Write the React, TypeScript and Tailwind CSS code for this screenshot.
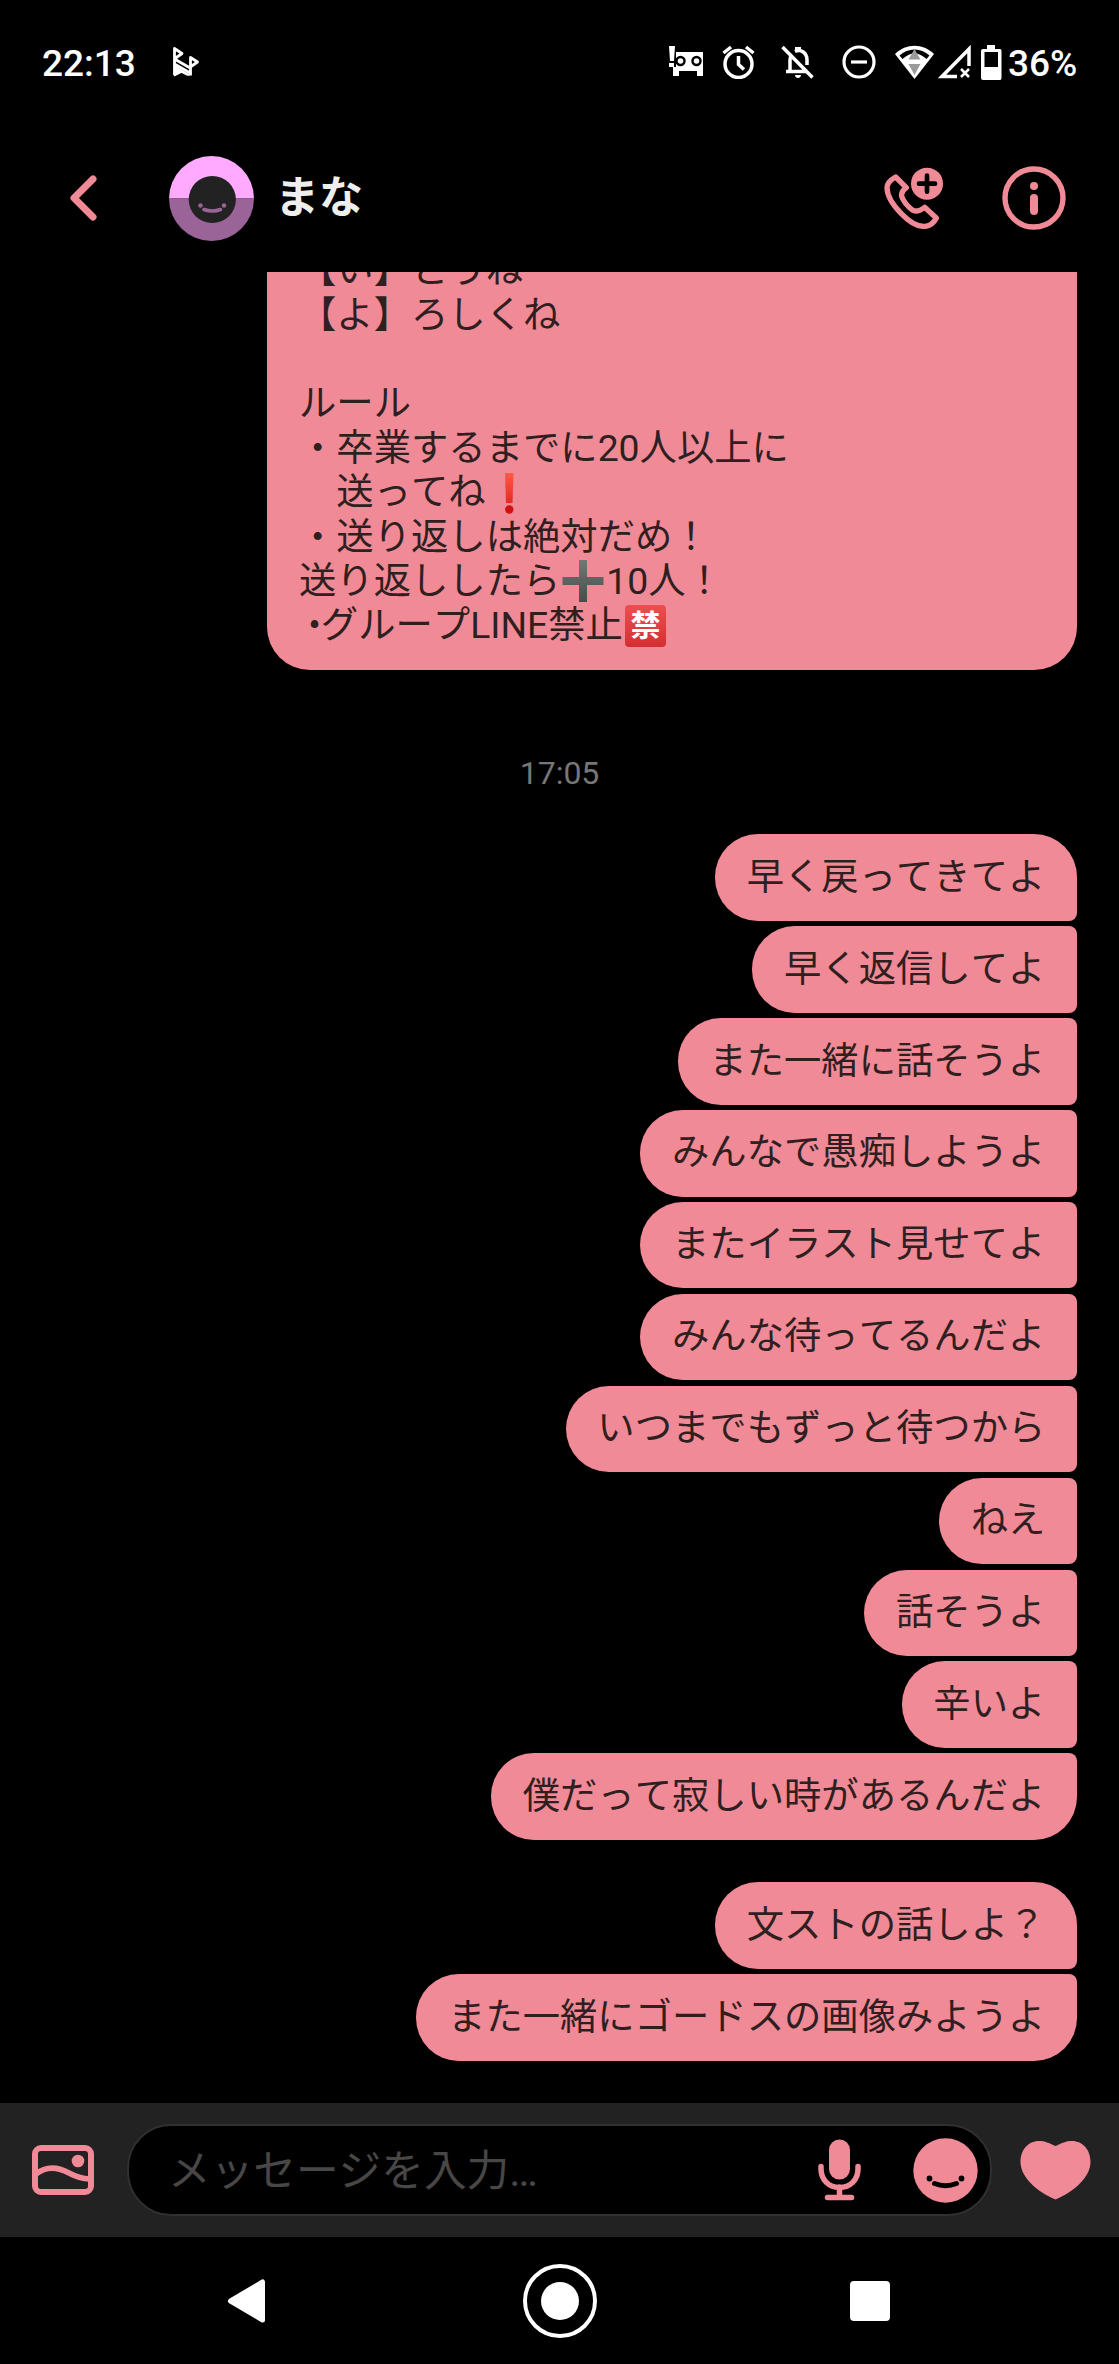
import type { ReactNode } from 'react';

type Corner = 'first' | 'middle' | 'last';

interface Message {
    text: string;
    corner: Corner;
}

const cornerClass: Record<Corner, string> = {
    first: 'rounded-[43px] rounded-br-[8px]',
    middle: 'rounded-l-[43px] rounded-r-[8px]',
    last: 'rounded-[43px] rounded-tr-[8px]',
};

const groups: Message[][] = [
    [
        { text: '早く戻ってきてよ', corner: 'first' },
        { text: '早く返信してよ', corner: 'middle' },
        { text: 'また一緒に話そうよ', corner: 'middle' },
        { text: 'みんなで愚痴しようよ', corner: 'middle' },
        { text: 'またイラスト見せてよ', corner: 'middle' },
        { text: 'みんな待ってるんだよ', corner: 'middle' },
        { text: 'いつまでもずっと待つから', corner: 'middle' },
        { text: 'ねえ', corner: 'middle' },
        { text: '話そうよ', corner: 'middle' },
        { text: '辛いよ', corner: 'middle' },
        { text: '僕だって寂しい時があるんだよ', corner: 'last' },
    ],
    [
        { text: '文ストの話しよ？', corner: 'first' },
        { text: 'また一緒にゴードスの画像みようよ', corner: 'last' },
    ],
];

function StatusBar() {
    return (
        <div className="flex h-[124px] shrink-0 items-center pl-[42px] pr-[41px] text-white">
            <span className="w-[130px] pt-[3px] text-[37px] font-medium leading-[44px]">22:13</span>
            <svg className="h-[32px] w-[28px]" viewBox="0 0 28 32" fill="none" stroke="currentColor" strokeWidth="2.8" strokeLinejoin="round">
                <path d="M2.500 29V2.500L10 7.500L3 12.500M2.500 13L19 22.500M2.500 18L19 27.500M18.500 29.500V11.500L25.500 16L19 20.500" />
                <path d="M2.500 20L17 29H15.500L9.500 26L2.500 29.500Z" fill="currentColor" strokeWidth="1.500" />
            </svg>

            <svg className="ml-auto h-[32px] w-[35px]" viewBox="0 0 35 32">
                <path fill="currentColor" d="M0 0H6L5 15H1ZM0 17H5V21H0ZM7 6H34V30H28V25H10V30H4V21H7Z" />
                <circle cx="11.500" cy="15" r="4" fill="currentColor" stroke="#000" strokeWidth="2.500" />
                <circle cx="27.500" cy="15" r="4" fill="currentColor" stroke="#000" strokeWidth="2.500" />
            </svg>
            <svg className="ml-[18px] h-[34px] w-[33px]" viewBox="0 0 33 34" fill="none" stroke="currentColor" strokeWidth="3.500">
                <circle cx="16.500" cy="19" r="13.500" />
                <path d="M16.500 11V19.500L22 24.500M1.500 8L9 2M31.500 8L24 2" />
            </svg>
            <svg className="ml-[26px] h-[34px] w-[33px]" viewBox="0 0 33 34" fill="none" stroke="currentColor" strokeWidth="3.500">
                <path d="M1.500 2L31.500 32.500M5 26.500H25M9 26V15C9 12.500 9.500 11 10.500 9.500M14 6.500C20 3.500 26 8 26 15V20" />
                <path d="M14 5V2H20V5M14 30H20C20 34 14 34 14 30Z" fill="currentColor" stroke="none" />
            </svg>
            <svg className="ml-[28px] h-[34px] w-[34px]" viewBox="0 0 34 34" fill="none" stroke="currentColor" strokeWidth="3.200">
                <circle cx="17" cy="17" r="15" />
                <path d="M9 17H25" />
            </svg>
            <svg className="ml-[19px] h-[34px] w-[39px]" viewBox="0 0 39 34">
                <path fill="currentColor" d="M0 9C11 -2 28 -2 39 9L19.500 34Z" />
                <path fill="#000" d="M4.500 10.500C13 2.500 26 2.500 34.500 10.500L31.500 14C24 6.500 15 6.500 7.500 14Z" />
                <path fill="#9a9a9a" d="M19.500 4L25.500 14.500H13.500ZM13.500 19H25.500L19.500 30Z" />
            </svg>
            <svg className="ml-[4px] h-[34px] w-[33px]" viewBox="0 0 33 34" fill="none" stroke="currentColor">
                <path d="M31 21V4L4 31.500H19" strokeWidth="3.500" />
                <path d="M23 24L31 32M31 24L23 32" strokeWidth="2.500" />
            </svg>
            <svg className="ml-[10px] h-[35px] w-[21px]" viewBox="0 0 21 35">
                <path fill="currentColor" fillRule="evenodd" d="M6 0H14V4H19Q20.500 4 20.500 6V33Q20.500 35 19 35H2Q0 35 0 33V6Q0 4 2 4H6ZM3.500 7V22H17V7Z" />
            </svg>
            <span className="ml-[6px] w-[70px] whitespace-nowrap pt-[3px] text-[37px] font-medium leading-[44px]">36%</span>
        </div>
    );
}

function ChatHeader() {
    return (
        <div className="flex h-[148px] shrink-0 items-center pl-[69px] pr-[53px] text-[#f18a97]">
            <svg className="h-[48px] w-[30px]" viewBox="0 0 30 48" fill="none" stroke="currentColor" strokeWidth="7" strokeLinecap="round" strokeLinejoin="round">
                <path d="M24 5L5 24L24 43" />
            </svg>
            <svg className="ml-[70px] h-[85px] w-[85px]" viewBox="0 0 85 85">
                <path fill="#ffaaff" d="M0 42.500A42.500 42.500 0 0 1 85 42.500Z" />
                <path fill="#9b6499" d="M0 42.500A42.500 42.500 0 0 0 85 42.500Z" />
                <circle cx="43.300" cy="43.500" r="23.600" fill="#222" />
                <g fill="#9b6499">
                    <circle cx="31.500" cy="49.500" r="2.200" />
                    <circle cx="55" cy="49.500" r="2.200" />
                </g>
                <path d="M35 53.500Q43.300 56.500 51.500 53.500" fill="none" stroke="#9b6499" strokeWidth="3.600" strokeLinecap="round" />
            </svg>
            <span className="ml-[21px] text-[44px] font-bold leading-[50px] text-[#eee]">まな</span>

            <svg className="ml-auto h-[62px] w-[60px]" viewBox="0 0 180 186">
                <path
                    fill="none"
                    stroke="currentColor"
                    strokeWidth="16"
                    strokeLinejoin="round"
                    d="M38 30L70 62Q53 74 56 88Q64 110 88 129Q102 138 125 121L160 153Q149 175 127 178Q94 181 55 140Q12 97 12 61Q13 44 38 30Z"
                />
                <circle cx="132" cy="50" r="48" fill="currentColor" />
                <path d="M132 26V74M108 50H156" stroke="#000" strokeWidth="14" strokeLinecap="round" />
            </svg>
            <svg className="ml-[59px] h-[64px] w-[64px]" viewBox="0 0 64 64">
                <circle cx="32" cy="32" r="29" fill="none" stroke="currentColor" strokeWidth="5.400" />
                <circle cx="32" cy="20" r="4" fill="currentColor" />
                <rect x="28" y="28" width="8" height="21" rx="4" fill="currentColor" />
            </svg>
        </div>
    );
}

function Bubble({ corner, children }: { corner: Corner; children: ReactNode }) {
    return (
        <div className={`self-end whitespace-nowrap bg-[#f18a97] px-[31.700px] pb-[21.800px] pt-[20.500px] text-[37.33px] leading-[44.3px] text-[#2f1f20] ${cornerClass[corner]}`}>
            {children}
        </div>
    );
}

function ExclamationEmoji() {
    return (
        <svg className="inline-block h-[42px] w-[46px] align-[-9px]" viewBox="0 0 46 42">
            <defs>
                <linearGradient id="exclamation" x1="0" y1="0" x2="0" y2="1">
                    <stop offset="0" stopColor="#ff5a45" />
                    <stop offset="1" stopColor="#e52a22" />
                </linearGradient>
            </defs>
            <path fill="url(#exclamation)" d="M19 1H27.500L26.500 31H20Z" />
            <circle cx="23.300" cy="37.500" r="4.200" fill="#d30f10" />
        </svg>
    );
}

function PlusEmoji() {
    return (
        <svg className="inline-block h-[44px] w-[46px] align-[-9px]" viewBox="0 0 46 44">
            <defs>
                <linearGradient id="plus" x1="0" y1="0" x2="0" y2="1">
                    <stop offset="0" stopColor="#737876" />
                    <stop offset="1" stopColor="#474b49" />
                </linearGradient>
            </defs>
            <path fill="url(#plus)" d="M19 1H27V18H43.500V26H27V43H19V26H2.500V18H19Z" />
        </svg>
    );
}

function RuleMessage() {
    return (
        <div className="w-[810px] self-end whitespace-pre rounded-b-[43px] bg-[#f18a97] px-[32px] pb-[22.500px] text-[37.33px] leading-[44.4px] text-[#2f1f20]">
            <p className="h-[44.4px]">【い】とうね</p>
            <p className="h-[44.4px]">【よ】ろしくね</p>
            <p className="h-[44.4px]"> </p>
            <p className="h-[44.4px]">ルール</p>
            <p className="h-[44.4px]">・卒業するまでに20人以上に</p>
            <p className="h-[44.4px]">　送ってね<ExclamationEmoji /></p>
            <p className="h-[44.4px]">・送り返しは絶対だめ！</p>
            <p className="h-[44.4px]">送り返ししたら<PlusEmoji />10人！</p>
            <p className="h-[44.4px]">
                {' •グループLINE禁止'}
                <span className="ml-[2px] inline-flex h-[42px] w-[41px] items-center justify-center rounded-[4px] bg-linear-to-b from-[#ec4f50] to-[#d32f33] align-[2px] text-[30px] font-bold leading-none text-white">禁</span>
            </p>
        </div>
    );
}

function InputBar() {
    return (
        <div className="flex h-[134px] shrink-0 items-center bg-[#222] pl-[32px] pr-[28px] text-[#f18a97]">
            <svg className="h-[50px] w-[62px]" viewBox="0 0 62 50" fill="none" stroke="currentColor" strokeWidth="6">
                <rect x="3" y="3" width="56" height="44" rx="6" />
                <path d="M4 29C14 21 26 22 37 28Q47 33.500 58 34" strokeWidth="5.500" />
                <circle cx="46" cy="16" r="6.300" fill="currentColor" stroke="none" />
            </svg>
            <div className="ml-[33px] flex h-[92px] w-[865px] items-center rounded-[44px] border-2 border-[#303030] bg-black pl-[39px] pr-[12px]">
                <span className="pt-[1px] text-[42.67px] leading-[50px] text-[#484746]">メッセージを入力…</span>
                <svg className="ml-auto h-[62px] w-[43px]" viewBox="0 0 43 62" fill="none" stroke="currentColor" strokeWidth="5.500" strokeLinecap="round">
                    <rect x="11" y="0.500" width="21" height="40" rx="10.500" fill="currentColor" stroke="none" />
                    <path d="M3 27.500V30C3 41 11 48.500 21.500 48.500C32 48.500 40 41 40 30V27.500M21.500 48V58M9.500 58.500H33.500" />
                </svg>
                <svg className="ml-[52px] h-[65px] w-[65px]" viewBox="0 0 65 65">
                    <circle cx="32.500" cy="32.500" r="32.200" fill="currentColor" />
                    <circle cx="16.500" cy="40.500" r="2.900" fill="#000" />
                    <circle cx="48.500" cy="40.500" r="2.900" fill="#000" />
                    <path d="M21.500 45.500Q32.500 50 43.500 45.500" fill="none" stroke="#000" strokeWidth="5" strokeLinecap="round" />
                </svg>
            </div>
            <svg className="ml-auto h-[60px] w-[71px]" viewBox="0 0 71 60">
                <path fill="currentColor" d="M35.500 6C29 3 25 1 19 1C8 1 0.500 10 0.500 22C0.500 37 17 52 35.500 59.500C54 52 70.500 37 70.500 22C70.500 10 63 1 52 1C46 1 42 3 35.500 6Z" />
            </svg>
        </div>
    );
}

function NavigationBar() {
    return (
        <div className="flex h-[127px] shrink-0 items-center pl-[227px] text-white">
            <svg className="h-[46px] w-[38px]" viewBox="0 0 38 46">
                <path fill="currentColor" stroke="currentColor" strokeWidth="5" strokeLinejoin="round" d="M3.500 23L35.500 4V42Z" />
            </svg>
            <div className="ml-[258px] flex size-[74px] items-center justify-center rounded-full border-4 border-white">
                <div className="size-[38px] rounded-full bg-white" />
            </div>
            <div className="ml-[253px] size-[40px] rounded-[4px] bg-white" />
        </div>
    );
}

export default function App() {
    return (
        <div className="flex h-[2364px] w-[1119px] flex-col overflow-hidden bg-black font-[Roboto,'Noto_Sans_CJK_JP',sans-serif] [font-kerning:none]" lang="ja">
            <StatusBar />
            <ChatHeader />

            {/* Conversation, pinned to the newest message */}
            <div className="flex h-[1831px] shrink-0 flex-col justify-end overflow-hidden pb-[42.3px] pr-[42px]">
                <RuleMessage />
                <div className="h-[164px] shrink-0 pl-[42px] pt-[81px] text-center text-[32px] leading-[44px] text-[#777]">17:05</div>
                <div className="flex flex-col gap-[42.3px]">
                    {groups.map((group, i) => (
                        <div key={i} className="flex flex-col gap-[5.320px]">
                            {group.map(message => (
                                <Bubble key={message.text} corner={message.corner}>{message.text}</Bubble>
                            ))}
                        </div>
                    ))}
                </div>
            </div>

            <InputBar />
            <NavigationBar />
        </div>
    );
}
